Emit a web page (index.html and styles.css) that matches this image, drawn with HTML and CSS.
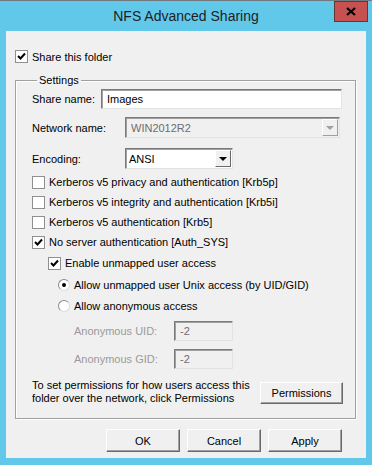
FILE: index.html
```html
<!DOCTYPE html>
<html lang="en">
<head>
<meta charset="UTF-8" />
<title>NFS Advanced Sharing</title>
<link rel="stylesheet" href="styles.css">
</head>
<body>

<div class="window">
  <div class="titlebar">
    <span></span>
    <span class="title">NFS Advanced Sharing</span>
    <span class="close">
      <svg width="10" height="9" viewBox="0 0 10 9"><path d="M1 1 L9 8 M9 1 L1 8" stroke="#000" stroke-width="2.2" /></svg>
    </span>
  </div>

  <div class="client">
    <div class="check top-check"><span class="box"><svg width="11" height="11" viewBox="0 0 11 11"><polyline points="2,5 4.5,7.5 9,2.5" fill="none" stroke="#000" stroke-width="2" /></svg></span>Share this folder</div>

    <fieldset class="group">
      <legend>Settings</legend>

      <div class="field r-share">
        <span class="lbl w-short">Share name:</span>
        <span class="textbox share-box">Images</span>
      </div>
      <div class="field r-net">
        <span class="lbl w-long">Network name:</span>
        <span class="combo disabled net-box">WIN2012R2<span class="arrow"></span></span>
      </div>
      <div class="field r-enc">
        <span class="lbl w-long">Encoding:</span>
        <span class="combo enc-box">ANSI<span class="arrow"></span></span>
      </div>

      <div class="check opt first"><span class="box"></span>Kerberos v5 privacy and authentication [Krb5p]</div>
      <div class="check opt"><span class="box"></span>Kerberos v5 integrity and authentication [Krb5i]</div>
      <div class="check opt"><span class="box"></span>Kerberos v5 authentication [Krb5]</div>
      <div class="check opt"><span class="box"><svg width="11" height="11" viewBox="0 0 11 11"><polyline points="2,5 4.5,7.5 9,2.5" fill="none" stroke="#000" stroke-width="2" /></svg></span>No server authentication [Auth_SYS]</div>
      <div class="check opt indent1 r-enable"><span class="box"><svg width="11" height="11" viewBox="0 0 11 11"><polyline points="2,5 4.5,7.5 9,2.5" fill="none" stroke="#000" stroke-width="2" /></svg></span>Enable unmapped user access</div>

      <div class="check opt indent2 r-radio1"><span class="radio on"></span>Allow unmapped user Unix access (by UID/GID)</div>
      <div class="check opt indent2 r-radio2"><span class="radio"></span>Allow anonymous access</div>

      <div class="field anon r-uid">
        <span class="lbl grey w-anon">Anonymous UID:</span>
        <span class="textbox disabled anon-box">-2</span>
      </div>
      <div class="field anon r-gid">
        <span class="lbl grey w-anon">Anonymous GID:</span>
        <span class="textbox disabled anon-box">-2</span>
      </div>

      <div class="perm-row">
        <p class="perm-text">To set permissions for how users access this folder over the network, click Permissions</p>
        <span class="btn perm-btn">Permissions</span>
      </div>
    </fieldset>

    <div class="actions">
      <span class="btn">OK</span>
      <span class="btn">Cancel</span>
      <span class="btn">Apply</span>
    </div>
  </div>
</div>

</body>
</html>
```

FILE: styles.css
```css
* { box-sizing: border-box; }
body { margin: 0; background: #fff; font-family: "Liberation Sans", Arial, sans-serif; font-size: 11px; color: #000; }

.window { width: 372px; height: 465px; background: #62c8ea; border-top: 1px solid #707a7e; padding: 0 6px 7px 6px; display: flex; flex-direction: column; }
.titlebar { height: 30px; display: grid; grid-template-columns: 1fr auto 1fr; align-items: start; }
.title { font-size: 14px; line-height: 30px; color: #1e1e1e; }
.close { justify-self: end; margin-right: -2px; width: 34px; height: 21px; background: #c75050; border: 1px solid #5e3a33; display: flex; align-items: center; justify-content: center; }

.client { flex: 1; background: #f0f0f0; padding: 19px 0 0 9px; }

.check { display: flex; align-items: center; height: 20px; white-space: nowrap; }
.top-check { height: 13px; }
.box { width: 13px; height: 13px; flex: none; background: #fff; border: 1px solid #8e8f8f; margin-right: 4px; display: flex; align-items: center; justify-content: center; }
.radio { width: 12px; height: 12px; flex: none; border-radius: 50%; background: #fff; border: 1px solid; border-color: #8a8a8a #dcdcdc #dcdcdc #8a8a8a; margin-right: 4px; display: flex; align-items: center; justify-content: center; }
.radio.on::after { content: ""; width: 4px; height: 4px; border-radius: 50%; background: #000; }

.group { margin: 11px 0 0 0; width: 341px; height: 345px; padding: 2px 12px 0 16px; border: 1px solid #a0a0a0; box-shadow: 1px 1px 0 #fff, inset 1px 1px 0 #fff; }
.group legend { margin-left: 5px; padding: 0 2px; line-height: 13px; }

.field { display: flex; align-items: center; }
.lbl { flex: none; }
.w-short { width: 69px; }
.w-long { width: 93px; }
.w-anon { width: 100px; }
.grey { color: #9a9a9a; }

.textbox, .combo { height: 20px; display: flex; align-items: center; background: #fff; border: 1px solid; border-color: #7a7a7a #e3e3e3 #e3e3e3 #7a7a7a; box-shadow: inset 1px 1px 0 #a0a0a0; padding-left: 5px; }
.disabled { background: #f0f0f0; color: #6d6d6d; }
.share-box { width: 241px; }
.net-box { width: 215px; height: 21px; }
.enc-box { width: 108px; height: 21px; padding-left: 3px; }
.combo { justify-content: space-between; padding-right: 1px; }
.arrow { width: 16px; height: 17px; border: 1px solid; border-color: #fff #696969 #696969 #fff; background: #f0f0f0; display: flex; align-items: center; justify-content: center; }
.arrow::after { content: ""; border-left: 4px solid transparent; border-right: 4px solid transparent; border-top: 4px solid #000; }
.disabled .arrow { border-color: #fff #a0a0a0 #a0a0a0 #fff; }
.disabled .arrow::after { border-top-color: #a0a0a0; }
.anon-box { width: 59px; }

.r-share { margin-top: 0; }
.r-net { margin-top: 8px; }
.r-enc { margin-top: 10px; }
.opt.first { margin-top: 3px; }
.indent1 { padding-left: 16px; }
.indent2 { padding-left: 26px; }
.r-enable { margin-top: 1px; }
.r-radio1 { margin-top: 2px; }
.r-radio2 { margin-top: 1px; }
.anon { padding-left: 42px; }
.r-uid { margin-top: 5px; }
.r-gid { margin-top: 8px; }

.perm-row { display: flex; align-items: flex-start; margin-top: 10px; }
.perm-text { margin: 0; width: 228px; line-height: 13px; }
.btn { display: flex; align-items: center; justify-content: center; height: 22px; background: #f0f0f0; border: 1px solid; border-color: #fff #696969 #696969 #fff; box-shadow: inset -1px -1px 0 #a0a0a0; }
.perm-btn { width: 83px; margin-top: 3px; }

.actions { display: flex; justify-content: flex-end; gap: 7px; margin-top: 10px; padding-right: 24px; }
.actions .btn { width: 74px; height: 23px; }
```
